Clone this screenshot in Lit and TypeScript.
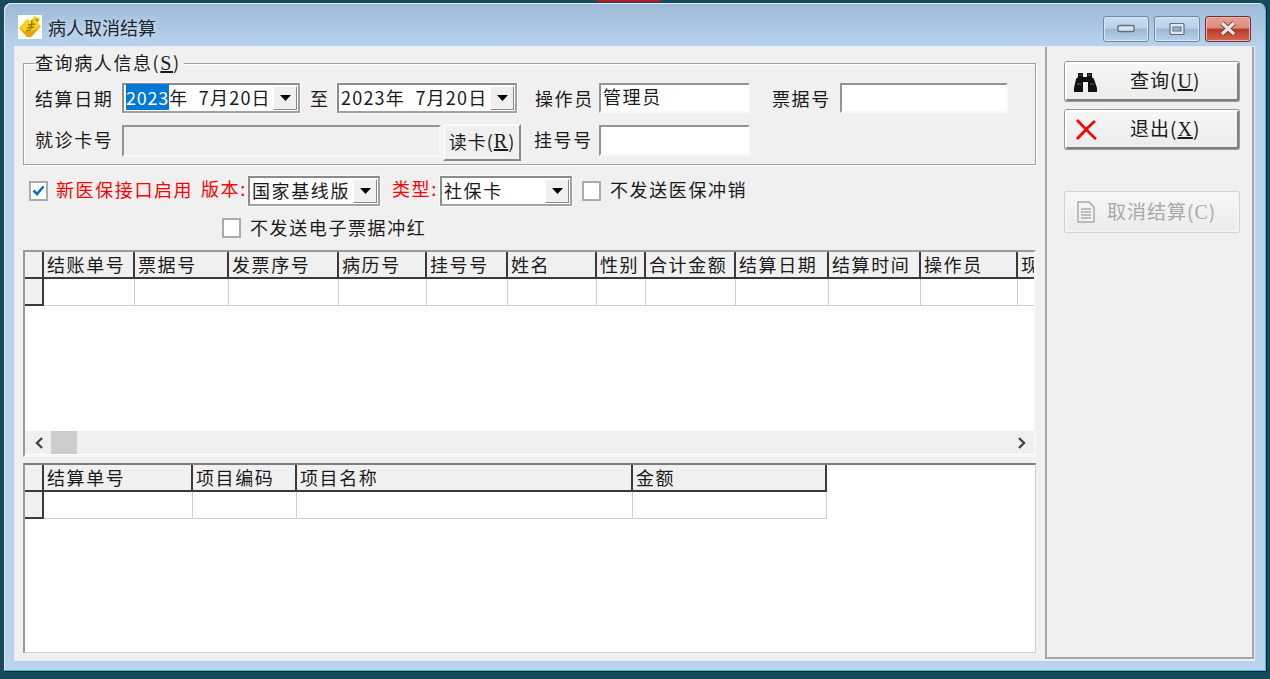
import { LitElement, html, css, svg } from "lit";
import { customElement } from "lit/decorators.js";

const grid1 = [
  ["结账单号", 91], ["票据号", 94], ["发票序号", 110], ["病历号", 88], ["挂号号", 81], ["姓名", 89],
  ["性别", 49], ["合计金额", 90], ["结算日期", 93], ["结算时间", 92], ["操作员", 97], ["现", 40],
] as [string, number][];
const grid2 = [["结算单号", 149], ["项目编码", 104], ["项目名称", 336], ["金额", 194]] as [string, number][];

const arrow = svg`<svg width="11" height="6" viewBox="0 0 11 6"><path d="M0 0H11L5.5 6Z" fill="#000"/></svg>`;

@customElement("app-root")
export class AppRoot extends LitElement {
  static styles = css`
    :host { display: block; width: 1270px; height: 679px; background: #16495a; overflow: hidden; position: relative;
      font-family: "Noto Sans CJK SC", "Liberation Sans", sans-serif; font-size: 18px; letter-spacing: 1.6px; color: #1a1a1a; }
    * { box-sizing: border-box; }
    .sliver { position: absolute; left: 597px; top: 0; width: 63px; height: 2px; background: #b01c28; }
    .window { position: absolute; left: 4px; top: 3px; width: 1262px; height: 668px; display: flex; flex-direction: column;
      border-radius: 7px 7px 0 0; background: linear-gradient(#9db9d6 0, #b9d3ee 44px, #b9d3ee 100%);
      border-right: 1px solid #2fc4dc; border-bottom: 1px solid #2fc4dc; box-shadow: 1px 1px 0 #08232c, inset 1px 1px 0 #dfe9f3; }
    .title { height: 44px; display: flex; align-items: center; padding: 4px 0 0 14px; flex: none; }
    .title .t { margin-left: 6px; letter-spacing: 0; text-shadow: 0 0 6px #e6f0fa; color: #1c2733; font-size: 18px; line-height: 22px; }
    .wbtns { margin-left: auto; margin-right: 14px; display: flex; gap: 5px; margin-top: 3px; }
    .wb { width: 46px; height: 26px; border: 1px solid #6d88a4; border-radius: 3px; display: flex; align-items: center; justify-content: center;
      background: linear-gradient(#c9dbee 0, #bcd2e9 45%, #9db8d5 52%, #b9d0e8 100%); box-shadow: inset 0 0 0 1px #d8e5f2; }
    .wb.close { border-color: #70303a; background: linear-gradient(#e7a193 0, #dd8b7b 45%, #b93a26 52%, #cf6a57 100%); box-shadow: inset 0 0 0 1px #eab5aa; }
    .client { display: flex; margin-left: 11px; width: 1239px; height: 613px; background: #f0f0f0; flex: none; box-shadow: 0 0 0 1px #e4edf6; }
    .left { width: 1030px; padding: 4px 0 0 8px; flex: none; }
    .right { width: 209px; border: solid #a6a6a6; border-width: 0 2px 2px 2px; margin-bottom: 1px; padding: 15px 0 0 18px; flex: none; }
    fieldset { margin: 0; padding: 8px 0 3px 11px; width: 1013px; height: 114px; border: 1px solid #a0a0a0; box-shadow: inset 1px 1px 0 #fff, 1px 1px 0 #fff; }
    legend { height: 24px; padding: 0 3px 0 0; margin-left: 0; line-height: 22px; background: #f0f0f0; }
    u, .m { font-family: "Liberation Serif", serif; font-size: 20px; }
    .row { display: flex; align-items: center; }
    .r1 { height: 30px; }
    .r2 { height: 37px; margin-top: 11px; align-items: flex-start; }
    .r2 .lab { height: 32px; }
    .lab { display: flex; align-items: center; white-space: nowrap; flex: none; padding-bottom: 3px; }
    .r1 .lab { padding-bottom: 1px; }
    .sunk { border: 2px solid; border-color: #8c8c8c #a2a2a2 #a2a2a2 #8c8c8c; background: #fff; box-shadow: 0 0 0 1px #f9f9f9; display: flex; align-items: center; padding-left: 2px; flex: none; white-space: nowrap; height: 30px; }
    .sunk .tv { padding-bottom: 2px; display: flex; }
    .sunk .tv.date { letter-spacing: 1.2px; }
    .sunk.inp { border-color: #949494 #f8f8f8 #f8f8f8 #949494; box-shadow: none; }
    .sunk.inp .tv { padding-bottom: 4px; }
    .sunk.h31 { height: 31px; }
    .sunk.dis { background: #f0f0f0; height: 32px; margin-top: 1px; }
    .sel { background: #0078d7; color: #fff; letter-spacing: 0.8px; }
    .dd { margin-left: auto; width: 24px; height: 24px; flex: none; background: #f0f0f0; display: flex; align-items: center; justify-content: center; margin-right: 1px;
      border: 1px solid; border-color: #fff #8a8a8a #8a8a8a #fff; }
    .d1 { width: 178px; }
    .d2 { width: 180px; }
    .to { width: 37px; padding-left: 10px; }
    .w151 { width: 151px; }
    .w168 { width: 168px; }
    .btn { border: 2px solid; border-color: #fbfbfb #8a8a8a #8a8a8a #fbfbfb; background: #f0f0f0; display: flex; align-items: center; flex: none; white-space: nowrap; }
    .read { width: 78px; height: 37px; margin-left: 2px; justify-content: center; padding-bottom: 3px; letter-spacing: 1px; }
    .act { width: 174px; height: 39px; border-color: #fff #7f7f7f #7f7f7f #fff; border-radius: 2px; background: linear-gradient(#f6f6f6, #ececec); box-shadow: 0 0 0 1px #9a9a9a; margin-bottom: 9px; padding: 0 0 0 6px; font-size: 19px; }
    .act svg { flex: none; }
    .act .tx { margin-left: 31px; padding-bottom: 5px; letter-spacing: 1px; }
    .act.off { height: 40px; margin-top: 43px; color: #a9a9a9; box-shadow: 0 0 0 1px #d2d2d2; border-color: #f4f4f4; padding-left: 9px; }
    .act.off .tx { margin-left: 11px; padding-bottom: 4px; letter-spacing: 1px; }
    .opt1 { margin: 11px 0 0 6px; height: 29px; }
    .opt2 { margin: 13px 0 0 199px; height: 20px; }
    .cb { width: 19px; height: 20px; border: 2px solid #ababab; background: #fff; flex: none; display: flex; align-items: center; justify-content: center; }
    .red { color: #ff0000; }
    .g1 { margin-top: 12px; width: 1013px; border: 2px solid; border-color: #9a9a9a #f6f6f6 #f6f6f6 #9a9a9a; background: #fff; display: flex; flex-direction: column; overflow: hidden; }
    .g1.a { height: 207px; }
    .g1.b { height: 190px; margin-top: 6px; border-top-color: #7d7d7d; }
    .gr { display: flex; flex: none; }
    .hd { height: 27px; }
    .bd { height: 27px; }
    .c { flex: none; background: #f0f0f0; border-right: 2px solid #3a3a3a; border-bottom: 2px solid #3a3a3a; padding-left: 3px; line-height: 25px; white-space: nowrap; overflow: hidden; }
    .b { flex: none; background: #fff; border-right: 1px solid #cfcfcf; border-bottom: 1px solid #cfcfcf; }
    .scroll { margin-top: auto; margin-bottom: 1px; height: 23px; background: #f0f0f0; display: flex; align-items: center; flex: none; }
    .thumb { width: 26px; height: 23px; background: #cdcdcd; margin-left: 7px; }
    .scroll svg { margin-left: 9px; flex: none; }
    .scroll svg:last-child { margin-left: auto; margin-right: 7px; }
  `;

  private grid(cols: [string, number][]) {
    return html`
      <div class="gr hd"><div class="c" style="width:19px"></div>${cols.map(([t, w]) => html`<div class="c" style="width:${w}px">${t}</div>`)}</div>
      <div class="gr bd"><div class="c" style="width:19px"></div>${cols.map(([, w]) => html`<div class="b" style="width:${w}px"></div>`)}</div>`;
  }

  render() {
    return html`
      <div class="sliver"></div>
      <div class="window">
        <div class="title">
          <svg width="24" height="24" viewBox="0 0 24 24">
            <rect width="24" height="24" fill="#fff"/>
            <path d="M1 13L9 4L13 6L16 1L22 3L20 8L23 11L13 22L9 22Z" fill="#f8d21a"/>
            <path d="M1 13L9 22L13 22L23 11L14 16L8 17Z" fill="#e0a80c"/>
            <path d="M10 10L17 9M14 5L13 14M9 13L16 12M18 4L20 6M8 16L13 15" stroke="#9c7a0a" stroke-width="1.5" fill="none"/>
          </svg>
          <span class="t">病人取消结算</span>
          <div class="wbtns">
            <div class="wb"><svg width="18" height="9"><rect x="1" y="1.5" width="16" height="6" rx="1" fill="#dfe3e8" stroke="#5a6f85" stroke-width="1.4"/></svg></div>
            <div class="wb"><svg width="18" height="14"><rect x="2" y="1.5" width="14" height="11" rx="1" fill="#dfe6ee" stroke="#5a6f85" stroke-width="1.2"/><rect x="5" y="5" width="8" height="4" fill="#9db5cf" stroke="#5a6f85"/></svg></div>
            <div class="wb close"><svg width="20" height="15" viewBox="0 0 20 15"><path d="M4 2L16 13M16 2L4 13" stroke="#5d2c2c" stroke-width="5"/><path d="M4 2L16 13M16 2L4 13" stroke="#e8e4e2" stroke-width="3.4"/></svg></div>
          </div>
        </div>
        <div class="client">
          <div class="left">
            <fieldset>
              <legend>查询病人信息(<u>S</u>)</legend>
              <div class="row r1">
                <span class="lab" style="width:87px">结算日期</span>
                <div class="sunk d1"><span class="tv date"><span class="sel">2023</span>年 &nbsp;7月20日</span><span class="dd">${arrow}</span></div>
                <span class="lab to">至</span>
                <div class="sunk d2"><span class="tv date">2023年 &nbsp;7月20日</span><span class="dd">${arrow}</span></div>
                <span class="lab" style="margin-left:18px;width:64px">操作员</span>
                <div class="sunk inp w151"><span class="tv">管理员</span></div>
                <span class="lab" style="margin-left:22px;width:68px">票据号</span>
                <div class="sunk inp w168"></div>
              </div>
              <div class="row r2">
                <span class="lab" style="width:87px">就诊卡号</span>
                <div class="sunk inp dis" style="width:319px"></div>
                <div class="btn read">读卡(<u>R</u>)</div>
                <span class="lab" style="margin-left:13px;width:65px">挂号号</span>
                <div class="sunk inp w151 h31" style="margin-top:1px"></div>
              </div>
            </fieldset>
            <div class="row opt1">
              <span class="cb"><svg width="13" height="11" viewBox="0 0 13 11"><path d="M1.5 5.5L5 9L11.5 1.5" stroke="#0a6fd0" stroke-width="2.6" fill="none"/></svg></span>
              <span class="lab red" style="margin-left:8px;width:145px">新医保接口启用</span>
              <span class="lab red" style="width:47px;padding-bottom:5px">版本:</span>
              <div class="sunk" style="width:132px"><span class="tv">国家基线版</span><span class="dd">${arrow}</span></div>
              <span class="lab red" style="margin-left:12px;width:48px;padding-bottom:5px">类型:</span>
              <div class="sunk" style="width:132px"><span class="tv">社保卡</span><span class="dd">${arrow}</span></div>
              <span class="cb" style="margin-left:10px"></span>
              <span class="lab" style="margin-left:9px">不发送医保冲销</span>
            </div>
            <div class="row opt2">
              <span class="cb"></span>
              <span class="lab" style="margin-left:9px">不发送电子票据冲红</span>
            </div>
            <div class="g1 a">
              ${this.grid(grid1)}
              <div class="scroll">
                <svg width="10" height="12" viewBox="0 0 10 12"><path d="M8 1L3 6L8 11" stroke="#444" stroke-width="2.4" fill="none"/></svg>
                <div class="thumb"></div>
                <svg width="10" height="12" viewBox="0 0 10 12"><path d="M2 1L7 6L2 11" stroke="#444" stroke-width="2.4" fill="none"/></svg>
              </div>
            </div>
            <div class="g1 b">${this.grid(grid2)}</div>
          </div>
          <div class="right">
            <div class="btn act">
              <svg width="26" height="24" viewBox="0 0 26 24"><path d="M5 3H10V7H14V3H19V7L21 9L24 18V22H15V12H10V22H1V18L3 9L5 7Z" fill="#111"/><path d="M4 14H8M17 14H21M6 5H9M15 5H18" stroke="#666" stroke-width="1.2"/></svg>
              <span class="tx">查询(<u>U</u>)</span>
            </div>
            <div class="btn act">
              <svg width="26" height="24" viewBox="0 0 26 24"><path d="M4 2C10 8 16 15 23 21M22 3C15 9 10 15 4 21" stroke="#ff0000" stroke-width="2.8" fill="none"/></svg>
              <span class="tx">退出(<u>X</u>)</span>
            </div>
            <div class="btn act off">
              <svg width="20" height="24" viewBox="0 0 20 24"><path d="M2 2H13L18 7V22H2Z" fill="#f4f4f4" stroke="#a9a9a9" stroke-width="1.5"/><path d="M5 9H15M5 12H15M5 15H15M5 18H15" stroke="#a9a9a9" stroke-width="1.5"/></svg>
              <span class="tx">取消结算(<span class="m">C</span>)</span>
            </div>
          </div>
        </div>
      </div>
    `;
  }
}
